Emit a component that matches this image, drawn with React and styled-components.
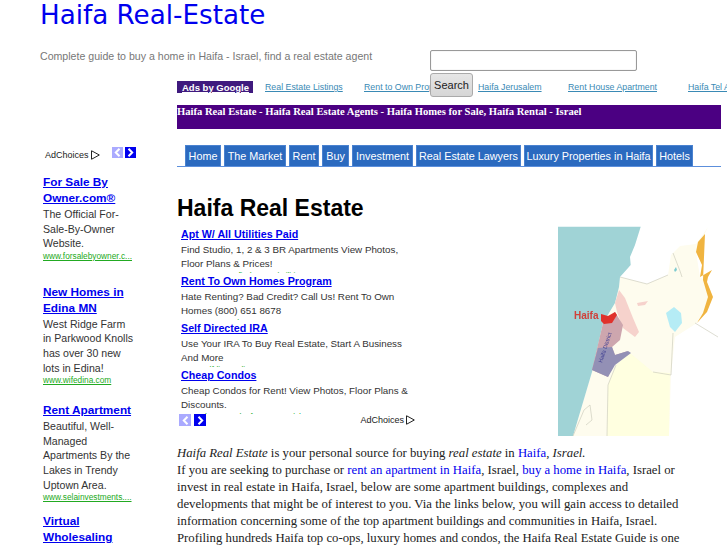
import React from "react";
import styled, { createGlobalStyle } from "styled-components";

const GlobalStyle = createGlobalStyle`
  html, body {
    margin: 0;
    padding: 0;
    height: 545px;
    overflow: hidden;
    background: #fff;
  }
  #root {
    height: 545px;
    overflow: hidden;
  }
`;

const Header = styled.header`
  padding: 0 0 0 40px;
  height: 81px;
`;

const SiteTitle = styled.h1`
  margin: 0;
  font: 400 26.2px/30px "DejaVu Sans", sans-serif;
  color: #0000ee;
`;

const HeaderRow = styled.div`
  display: flex;
  margin-top: 20px;
`;

const Tagline = styled.p`
  margin: 0;
  width: 390px;
  font: 400 10.6px/12px "Liberation Sans", sans-serif;
  color: #777;
`;

const SearchForm = styled.form`
  position: relative;
  z-index: 2;
  display: flex;
  flex-direction: column;
  align-items: flex-start;
  gap: 2px;
  height: 0;
`;

const SearchInput = styled.input`
  box-sizing: border-box;
  flex-shrink: 0;
  width: 207px;
  height: 21px;
  border: 1px solid #999;
  border-radius: 2px;
  box-shadow: inset 0 0 1px #bbb;
  background: #fff;
`;

const SearchButton = styled.button`
  box-sizing: border-box;
  flex-shrink: 0;
  width: 43px;
  height: 24px;
  padding: 0;
  border: 1px solid #aaa;
  border-radius: 3px;
  background: linear-gradient(#e6e6e6, #d6d6d6);
  font: 400 11px "Liberation Sans", sans-serif;
  color: #222;
`;

const Page = styled.div`
  display: grid;
  grid-template-columns: 177px 544px;
`;

const Sidebar = styled.aside`
  padding: 66px 0 0 43px;
`;

const SideTop = styled.div`
  display: flex;
  align-items: center;
  height: 11px;
  margin-bottom: 16px;
`;

const AdChoicesLabel = styled.span`
  display: inline-flex;
  align-items: center;
  gap: 2px;
  font: 400 9px/12px "Liberation Sans", sans-serif;
  color: #222;
`;

const SideLabelSlot = styled.div`
  width: 69px;
  padding-left: 2px;
  box-sizing: border-box;
`;

const Arrow = styled.span`
  display: inline-flex;
  align-items: center;
  justify-content: center;
  width: ${(p) => p.$size}px;
  height: ${(p) => p.$size}px;
  margin-right: ${(p) => p.$size - 9}px;
  background: ${(p) => (p.$off ? "#aaaaff" : "#0000ee")};
`;

const SideAd = styled.div`
  width: 93px;
  margin-bottom: ${(p) => p.$gap}px;
`;

const SideAdTitle = styled.a`
  display: block;
  font: 700 11.8px/16px "Liberation Sans", sans-serif;
  color: #0000ee;
  text-decoration: underline;
`;

const SideAdText = styled.div`
  margin-top: 1px;
  font: 400 10.6px/14.6px "Liberation Sans", sans-serif;
  color: #333;
`;

const AdUrl = styled.a`
  display: block;
  font: 400 8.3px/11px "Liberation Sans", sans-serif;
  color: #22aa22;
  text-decoration: underline;
  white-space: nowrap;
`;

const Main = styled.main`
  min-width: 0;
`;

const LinkStrip = styled.nav`
  display: grid;
  grid-template-columns: 88px 99px 114px 90px 120px 33px;
  height: 12px;
  align-items: center;
  margin-bottom: 12px;
`;

const SponsorChip = styled.a`
  justify-self: start;
  box-sizing: border-box;
  width: 76px;
  height: 12px;
  padding-left: 5px;
  background: #3f1a7e;
  font: 700 9.5px/13px "Liberation Sans", sans-serif;
  color: #fff;
  text-decoration: underline;
`;

const StripLink = styled.a`
  font: 400 8.8px/12px "Liberation Sans", sans-serif;
  color: #3a8ab5;
  text-decoration: underline;
  white-space: nowrap;
`;

const Banner = styled.div`
  box-sizing: border-box;
  height: 24px;
  background: #4b0082;
  font: 700 10.6px/14px "Liberation Serif", serif;
  color: #fff;
  white-space: nowrap;
`;

const Tabs = styled.ul`
  display: flex;
  gap: 3px;
  height: 21px;
  margin: 16px 0 0;
  padding: 0 0 0 8px;
  list-style: none;
  border-bottom: 1px solid #5c8fdc;
`;

const Tab = styled.li`
  box-sizing: border-box;
  width: ${(p) => p.$w}px;
  height: 21px;
  background: #2b6abf;
  border: 1px solid #4a82d0;
  border-bottom: 0;
  font: 400 10.8px/20px "Liberation Sans", sans-serif;
  color: #fff;
  text-align: center;
  white-space: nowrap;
`;

const Content = styled.div`
  display: flex;
  justify-content: space-between;
`;

const ContentLeft = styled.div`
  width: 240px;
`;

const PageTitle = styled.h2`
  margin: 0;
  padding-top: 28px;
  font: 700 23px/27px "Liberation Sans", sans-serif;
  color: #000;
`;

const AdList = styled.div`
  margin-top: 4px;
  padding-left: 4px;
`;

const InlineAd = styled.div`
  height: 47px;
  overflow: hidden;
`;

const InlineAdTitle = styled.a`
  display: block;
  font: 700 10.7px/16px "Liberation Sans", sans-serif;
  color: #0000ee;
  text-decoration: underline;
  white-space: nowrap;
`;

const InlineAdText = styled.div`
  width: 232px;
  margin-top: 1px;
  font: 400 9.8px/14px "Liberation Sans", sans-serif;
  color: #333;
`;

const AdFooter = styled.div`
  display: flex;
  align-items: center;
  justify-content: space-between;
  width: 236px;
  height: 12px;
  margin-left: -2px;
`;

const ArrowPair = styled.div`
  display: flex;
`;

const MapBox = styled.div`
  width: 163px;
  padding-top: 59px;
`;

const MapSvg = styled.svg`
  display: block;
  filter: blur(0.4px);
`;

const Intro = styled.p`
  width: 504px;
  margin: 7px 0 0;
  font: 400 12.75px/17px "Liberation Serif", serif;
  color: #222;
`;

const IntroLink = styled.a`
  color: #0000ee;
  text-decoration: none;
`;

const AdChoices = () => (
  <AdChoicesLabel>
    AdChoices
    <svg width="9" height="10" viewBox="0 0 9 10" fill="none" stroke="#222" strokeWidth="1">
      <path d="M0.5 0.5V9.5M1 1L8.3 5L1 9" />
    </svg>
  </AdChoicesLabel>
);

const NavArrow = ({ off, left, size = 11 }) => (
  <Arrow $off={off} $size={size}>
    <svg width="7" height="9" viewBox="0 0 7 9" fill="none" stroke="#fff" strokeWidth="2">
      <path d={left ? "M5.5 0.8L1.8 4.5L5.5 8.2" : "M1.5 0.8L5.2 4.5L1.5 8.2"} />
    </svg>
  </Arrow>
);

// rough drawing of the northern Israel map, units are picture px from (540, 215)
const HaifaMap = () => (
  <MapSvg width="163" height="212" viewBox="18 11 163 212">
    <path d="M33 221L52 157L63 108L75 88L79 72L80 62L92 65L107 69L128 60L131 40L140 31L156 29L168 12L156 37L160 62L167 67L173 82L157 108L135 122L131 160L129 221Z" fill="#fefcee" />
    <path d="M67 221L68 170L76 150L90 138L113 157L130 158L129 221Z" fill="#ffffe0" />
    <path d="M18 11.7H100.7L95 30L90 42L90.7 50L80 62L79 72L75 88L63 108L52 157L33 221H18Z" fill="#a0d3d6" />
    <path d="M79 75L85 83L93 103L99 117L95 122L83 113L77 97L75 88Z" fill="#f6d2cc" />
    <path d="M75 97L83 110L80 125L72 132L75 140L88 136L72 150L68 162L52 155L63 108Z" fill="#cda6ae" />
    <path d="M52 155L58 133L72 132L75 140L88 136L91 138L75 150L68 162Z" fill="#9390b5" />
    <path d="M61 99L68 101L75 97L77 100L72 108L64 109L61 106Z" fill="#e0322c" />
    <path d="M97 88L108 86L105 90L98 91Z" fill="#f6d2cc" />
    <path d="M134 55L136 52L137 55L135 57Z" fill="#7fcbd0" />
    <path d="M126 98L134 92L141 98L142 108L135 117L130 112Z" fill="#b5ecf5" />
    <path d="M165 19L158 27L156 37L162 50L160 62L172 55L168 62L167 67L173 82L167 97L157 108L163 98L168 82L163 65Z" fill="#f0b440" />
    <path d="M67 221L68 170L76 150M133 118L131 160L113 157M80 62L107 69L128 60M133 38L140 56L142 62M155 108L178 122" fill="none" stroke="#cfcfbe" strokeWidth="0.7" />
    <path d="M33 221L44 195L50 190L52 205L46 210" fill="none" stroke="#cfcfbe" strokeWidth="0.7" />
    <text x="34" y="104" fontFamily="Liberation Sans, sans-serif" fontWeight="700" fontSize="10" fill="#d0413a">Haifa</text>
    <text transform="translate(62 148) rotate(-72)" fontFamily="Liberation Sans, sans-serif" fontSize="5.5" fill="#3c3c90">Haifa District</text>
  </MapSvg>
);

const sideAds = [
  {
    title: "For Sale By Owner.com®",
    text: "The Official For-Sale-By-Owner Website.",
    url: "www.forsalebyowner.c...",
    gap: 22,
  },
  {
    title: "New Homes in Edina MN",
    text: "West Ridge Farm in Parkwood Knolls has over 30 new lots in Edina!",
    url: "www.wifedina.com",
    gap: 16,
  },
  {
    title: "Rent Apartment",
    text: "Beautiful, Well-Managed Apartments By the Lakes in Trendy Uptown Area.",
    url: "www.selainvestments....",
    gap: 10,
  },
  { title: "Virtual Wholesaling", text: "", url: "", gap: 0 },
];

const inlineAds = [
  {
    title: "Apt W/ All Utilities Paid",
    text: "Find Studio, 1, 2 & 3 BR Apartments View Photos, Floor Plans & Prices!",
    url: "www.apartmentfinder.com/utilities",
  },
  {
    title: "Rent To Own Homes Program",
    text: "Hate Renting? Bad Credit? Call Us! Rent To Own Homes (800) 651 8678",
    url: "www.renttoownhomesprogram.com",
  },
  {
    title: "Self Directed IRA",
    text: "Use Your IRA To Buy Real Estate, Start A Business And More",
    url: "www.selfdirectedira.com",
  },
  {
    title: "Cheap Condos",
    text: "Cheap Condos for Rent! View Photos, Floor Plans & Discounts.",
    url: "www.cheapcondosforrent.com/photos",
  },
];

const stripLinks = [
  "Real Estate Listings",
  "Rent to Own Properties",
  "Haifa Jerusalem",
  "Rent House Apartment",
  "Haifa Tel Aviv",
];

const tabs = [
  ["Home", 36],
  ["The Market", 62],
  ["Rent", 30],
  ["Buy", 27],
  ["Investment", 61],
  ["Real Estate Lawyers", 105],
  ["Luxury Properties in Haifa", 129],
  ["Hotels", 37],
];

export default function App() {
  return (
    <>
      <GlobalStyle />
      <Header>
        <SiteTitle>Haifa Real-Estate</SiteTitle>
        <HeaderRow>
          <Tagline>Complete guide to buy a home in Haifa - Israel, find a real estate agent</Tagline>
          <SearchForm onSubmit={(e) => e.preventDefault()}>
            <SearchInput type="text" />
            <SearchButton type="submit">Search</SearchButton>
          </SearchForm>
        </HeaderRow>
      </Header>
      <Page>
        <Sidebar>
          <SideTop>
            <SideLabelSlot>
              <AdChoices />
            </SideLabelSlot>
            <NavArrow off left />
            <NavArrow />
          </SideTop>
          {sideAds.map((ad) => (
            <SideAd key={ad.title} $gap={ad.gap}>
              <SideAdTitle>{ad.title}</SideAdTitle>
              {ad.text && <SideAdText>{ad.text}</SideAdText>}
              {ad.url && <AdUrl>{ad.url}</AdUrl>}
            </SideAd>
          ))}
        </Sidebar>
        <Main>
          <LinkStrip>
            <SponsorChip>Ads by Google</SponsorChip>
            {stripLinks.map((l) => (
              <StripLink key={l}>{l}</StripLink>
            ))}
          </LinkStrip>
          <Banner>Haifa Real Estate - Haifa Real Estate Agents - Haifa Homes for Sale, Haifa Rental - Israel</Banner>
          <Tabs>
            {tabs.map(([label, w]) => (
              <Tab key={label} $w={w}>
                {label}
              </Tab>
            ))}
          </Tabs>
          <Content>
            <ContentLeft>
              <PageTitle>Haifa Real Estate</PageTitle>
              <AdList>
                {inlineAds.map((ad) => (
                  <InlineAd key={ad.title}>
                    <InlineAdTitle>{ad.title}</InlineAdTitle>
                    <InlineAdText>{ad.text}</InlineAdText>
                    <AdUrl>{ad.url}</AdUrl>
                  </InlineAd>
                ))}
                <AdFooter>
                  <ArrowPair>
                    <NavArrow off left size={12} />
                    <NavArrow size={12} />
                  </ArrowPair>
                  <AdChoices />
                </AdFooter>
              </AdList>
            </ContentLeft>
            <MapBox>
              <HaifaMap />
            </MapBox>
          </Content>
          <Intro>
            <em>Haifa Real Estate</em> is your personal source for buying <em>real estate</em> in{" "}
            <IntroLink>Haifa</IntroLink>, <em>Israel.</em>
            <br />
            If you are seeking to purchase or <IntroLink>rent an apartment in Haifa</IntroLink>, Israel,{" "}
            <IntroLink>buy a home in Haifa</IntroLink>, Israel or invest in real estate in Haifa, Israel, below are
            some apartment buildings, complexes and developments that might be of interest to you. Via the links
            below, you will gain access to detailed information concerning some of the top apartment buildings and
            communities in Haifa, Israel. Profiling hundreds Haifa top co-ops, luxury homes and condos, the Haifa
            Real Estate Guide is one
          </Intro>
        </Main>
      </Page>
    </>
  );
}
